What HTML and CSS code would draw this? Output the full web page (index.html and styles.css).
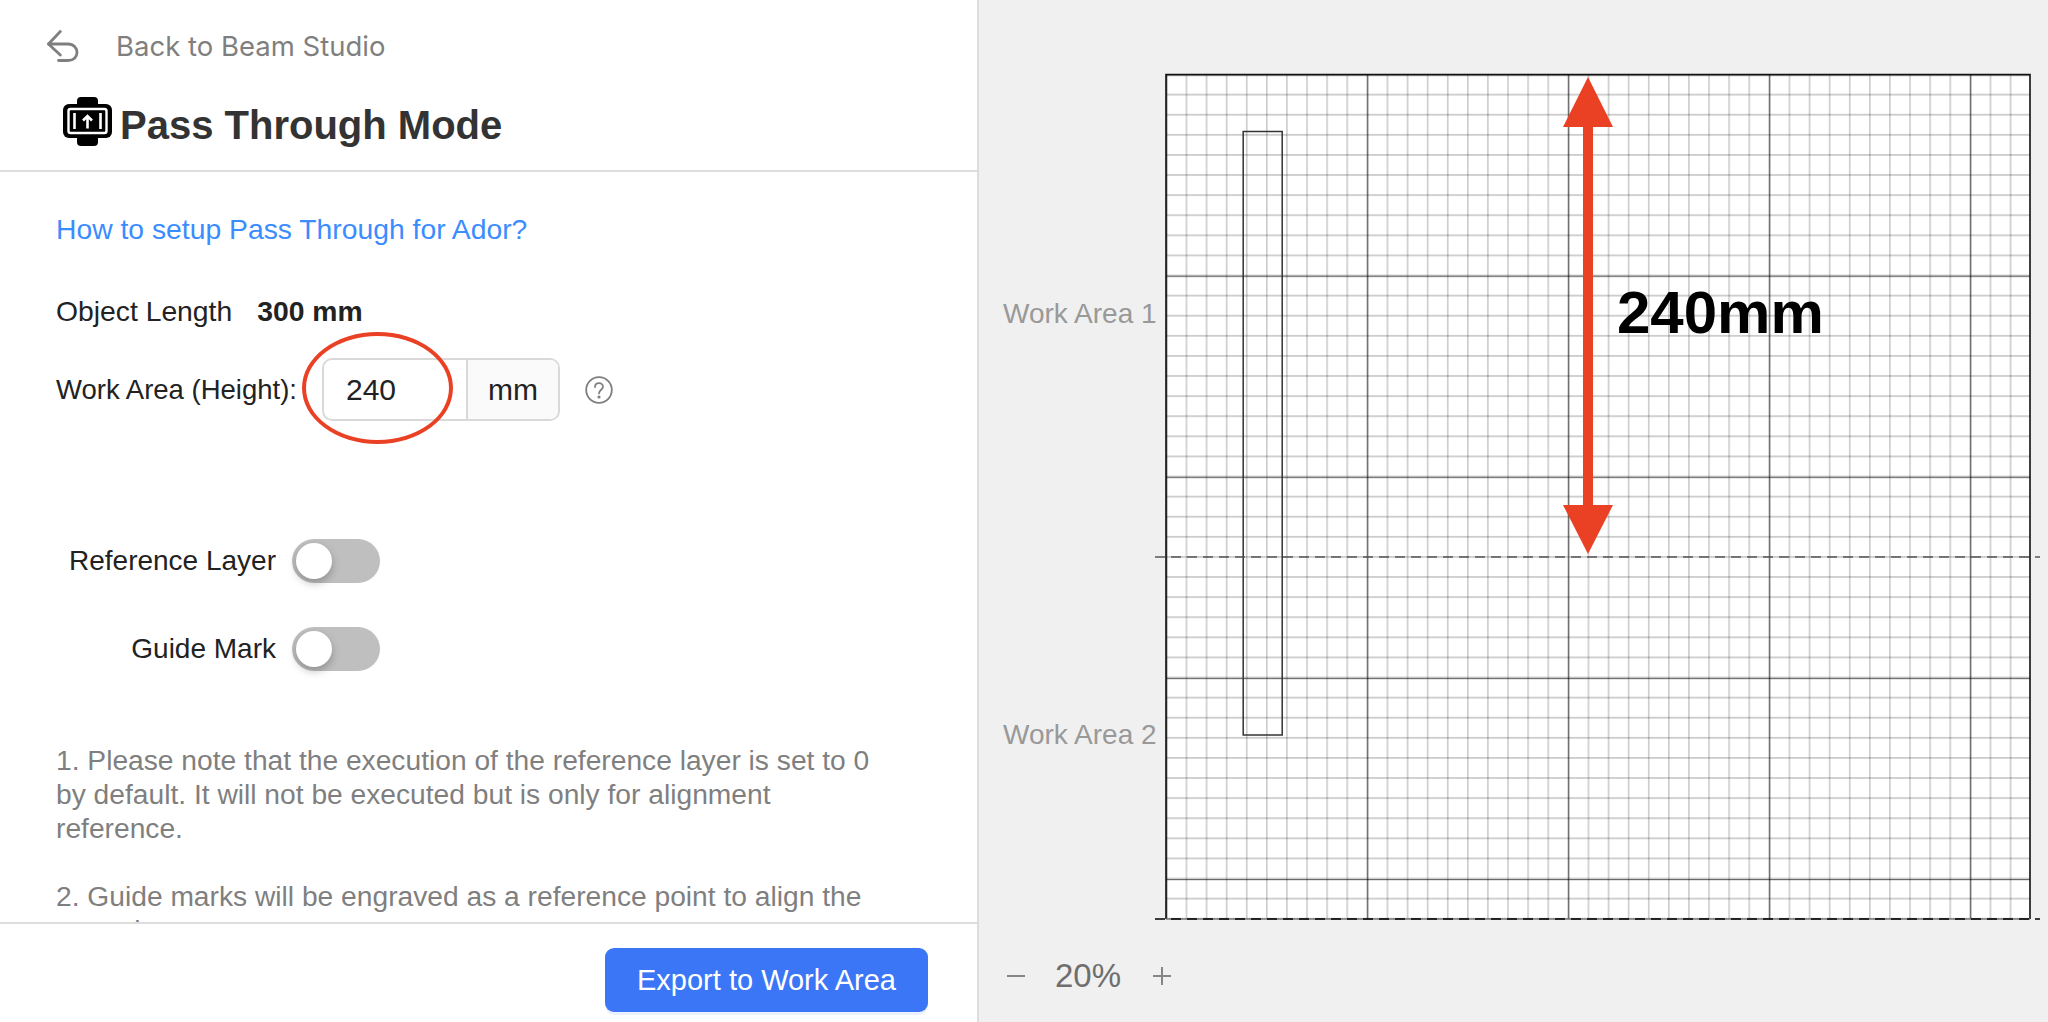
FILE: index.html

```html
<!DOCTYPE html>
<html lang="en">
<head>
  <meta charset="UTF-8" />
  <title>Pass Through Mode</title>
  <link rel="stylesheet" href="styles.css">
</head>
<body>
  <div class="page">
    <aside class="panel">
      <header class="panel-head">
        <div class="back-row">
          <svg class="back-icon" viewBox="0 0 32 32" fill="none" stroke="#7f7f7f" stroke-width="2.8" stroke-linecap="round" stroke-linejoin="round">
            <path d="M13.3 1.5 L1.5 14 L13.3 25" />
            <path d="M1.5 14 H21 C26.5 14 30 18 30 22.5 C30 27 26.5 30.5 21 30.5 H11.5" />
          </svg>
          <span class="back-text">Back to Beam Studio</span>
        </div>
        <div class="title-row">
          <svg class="title-icon" viewBox="0 0 49 49">
            <rect x="14" y="0" width="21" height="49" rx="4" fill="#000" />
            <rect x="0" y="7" width="49" height="34" rx="6" fill="#000" />
            <rect x="5.5" y="12" width="38" height="24" rx="2" fill="none" stroke="#fff" stroke-width="2.4" />
            <path d="M11.5 16 V32 M37.5 16 V32" stroke="#fff" stroke-width="2.6" />
            <path d="M24.5 31.5 V19 M20 23.5 L24.5 19 L29 23.5" fill="none" stroke="#fff" stroke-width="2.6" />
          </svg>
          <h1>Pass Through Mode</h1>
        </div>
      </header>

      <div class="panel-body">
        <a class="help-link" href="#">How to setup Pass Through for Ador?</a>
        <div class="length-row">
          <span>Object Length</span>
          <b>300 mm</b>
        </div>
        <div class="height-row">
          <span class="height-label">Work Area (Height):</span>
          <div class="unit-input">
            <span class="unit-value">240</span>
            <span class="unit-name">mm</span>
            <span class="red-ring"></span>
          </div>
          <svg class="help-icon" viewBox="0 0 28 28" fill="none" stroke="#7f7f7f" stroke-width="1.8">
            <circle cx="14" cy="14" r="12.8" />
            <path d="M10 11 C10 8.5 12 7.2 14 7.2 C16.2 7.2 18 8.7 18 10.8 C18 13.6 14 14 14 17.4" stroke-linecap="round" />
            <circle cx="14" cy="21" r="0.7" fill="#7f7f7f" />
          </svg>
        </div>

        <div class="switch-row first">
          <span class="switch-label">Reference Layer</span>
          <span class="switch"><span class="knob"></span></span>
        </div>
        <div class="switch-row">
          <span class="switch-label">Guide Mark</span>
          <span class="switch"><span class="knob"></span></span>
        </div>

        <div class="notes">
          <p>1. Please note that the execution of the reference layer is set to 0 by default. It will not be executed but is only for alignment reference.</p>
          <p>2. Guide marks will be engraved as a reference point to align the artwork.</p>
        </div>
      </div>

      <footer class="panel-foot">
        <button class="export-btn">Export to Work Area</button>
      </footer>
    </aside>

    <main class="stage">
      <div class="canvas">
        <svg class="grid" width="1069" height="1022" viewBox="0 0 1069 1022">
          <defs>
            <pattern id="minor-v" x="186.5" y="0" width="20.1" height="10" patternUnits="userSpaceOnUse">
              <rect x="0" y="0" width="1.6" height="10" fill="#000" fill-opacity="0.2" />
            </pattern>
            <pattern id="minor-h" x="0" y="73.6" width="10" height="20.1" patternUnits="userSpaceOnUse">
              <rect x="0" y="0" width="10" height="1.8" fill="#000" fill-opacity="0.2" />
            </pattern>
            <pattern id="major-v" x="186.9" y="0" width="201" height="10" patternUnits="userSpaceOnUse">
              <rect x="0" y="0" width="1.4" height="10" fill="#000" fill-opacity="0.5" />
            </pattern>
            <pattern id="major-h" x="0" y="74.6" width="10" height="201.1" patternUnits="userSpaceOnUse">
              <rect x="0" y="0" width="10" height="1.2" fill="#000" fill-opacity="0.55" />
            </pattern>
          </defs>
          <rect x="187" y="74" width="864" height="845" fill="#fff" />
          <rect x="187" y="74" width="864" height="845" fill="url(#minor-h)" />
          <rect x="187" y="74" width="864" height="845" fill="url(#minor-v)" />
          <rect x="187" y="74" width="864" height="845" fill="url(#major-v)" />
          <rect x="187" y="74" width="864" height="845" fill="url(#major-h)" />
          <path d="M187 919 V74.5 H1051 V919" fill="none" stroke="#111" stroke-width="1.6" />
          <rect x="264.2" y="131.5" width="39" height="603.5" fill="none" stroke="#333" stroke-width="1.5" />
          <path d="M176 557 H1061" stroke="#555" stroke-width="1.4" stroke-dasharray="10 6" />
          <path d="M187 919 H1051" stroke="#777" stroke-width="1.4" />
          <path d="M176 919 H1061" stroke="#000" stroke-width="1.6" stroke-dasharray="10 6" />
          <path d="M609 120 V512" stroke="#ea4125" stroke-width="10" />
          <path d="M609 77 L634 127 H584 Z" fill="#ea4125" />
          <path d="M609 554 L634 505 H584 Z" fill="#ea4125" />
        </svg>
        <span class="area-label area-one">Work Area 1</span>
        <span class="area-label area-two">Work Area 2</span>
        <span class="size-label">240mm</span>
      </div>
      <div class="zoom-bar">
        <svg class="zoom-icon" viewBox="0 0 18 18" stroke="#858585" stroke-width="2"><path d="M0 9 H18" /></svg>
        <span class="zoom-value">20%</span>
        <svg class="zoom-icon" viewBox="0 0 18 18" stroke="#858585" stroke-width="2"><path d="M0 9 H18 M9 0 V18" /></svg>
      </div>
    </main>
  </div>
</body>
</html>
```

FILE: styles.css

```css
* {
  box-sizing: border-box;
}

html, body {
  margin: 0;
  height: 100%;
  overflow: hidden;
}

body {
  font-family: 'Liberation Sans', Arial, sans-serif;
  background-color: #fff;
  color: #222;
}

.page {
  display: flex;
  width: 2048px;
  height: 1022px;
}

/* left panel */
.panel {
  flex: none;
  width: 979px;
  height: 1022px;
  display: flex;
  flex-direction: column;
  border-right: 2px solid #ddd;
  background-color: #fff;
}

.panel-head {
  flex: none;
  height: 172px;
  border-bottom: 2px solid #ddd;
  padding: 30px 0 0 47px;
}

.back-row {
  display: flex;
  align-items: center;
  gap: 37px;
  height: 32px;
}

.back-icon {
  width: 32px;
  height: 32px;
}

.back-text {
  font-family: Inter, 'Liberation Sans', sans-serif;
  font-size: 27.5px;
  color: #7f7f7f;
}

.title-row {
  display: flex;
  align-items: flex-start;
  gap: 8px;
  margin-top: 35px;
  padding-left: 16px;
}

.title-icon {
  width: 49px;
  height: 49px;
}

h1 {
  margin: 5px 0 0;
  font-size: 40px;
  line-height: 46px;
  color: #333;
}

.panel-body {
  flex: 1;
  min-height: 0;
  overflow: hidden;
  padding: 40px 96px 0 56px;
  font-size: 28.3px;
}

.help-link {
  display: block;
  height: 34px;
  line-height: 34px;
  color: #3b8cff;
  text-decoration: none;
}

.length-row {
  display: flex;
  gap: 25px;
  margin-top: 48px;
  height: 34px;
  line-height: 34px;
}

.height-row {
  display: flex;
  align-items: center;
  margin-top: 30px;
  height: 63px;
}

.height-label {
  width: 266px;
  font-size: 27.5px;
}

.unit-input {
  position: relative;
  display: flex;
  width: 238px;
  height: 63px;
  border: 2px solid #d9d9d9;
  border-radius: 10px;
  font-size: 30px;
}

.unit-value {
  width: 142px;
  padding-left: 22px;
  line-height: 59px;
}

.unit-name {
  flex: 1;
  text-align: center;
  line-height: 59px;
  background-color: #fafafa;
  border-left: 2px solid #d9d9d9;
  border-radius: 0 8px 8px 0;
}

.red-ring {
  position: absolute;
  left: -22px;
  top: -28px;
  width: 151px;
  height: 112px;
  border: 4px solid #ea4125;
  border-radius: 50%;
}

.help-icon {
  width: 28px;
  height: 28px;
  margin-left: 25px;
}

.switch-row {
  display: flex;
  align-items: center;
  justify-content: flex-end;
  width: 324px;
  height: 44px;
  margin-top: 44px;
  gap: 16px;
  font-size: 28px;
}

.switch-row.first {
  margin-top: 118px;
}

.switch {
  display: block;
  position: relative;
  width: 88px;
  height: 44px;
  border-radius: 22px;
  background-color: #bfbfbf;
}

.knob {
  position: absolute;
  left: 4px;
  top: 4px;
  width: 36px;
  height: 36px;
  border-radius: 50%;
  background-color: #fff;
  box-shadow: 0 4px 8px rgba(0, 0, 0, 0.25);
}

.notes {
  margin-top: 72px;
  font-size: 28.2px;
  line-height: 34px;
  color: #7f7f7f;
}

.notes p {
  margin: 0 0 34px;
}

.panel-foot {
  flex: none;
  display: flex;
  justify-content: flex-end;
  align-items: flex-start;
  height: 100px;
  padding: 24px 49px 0 0;
  border-top: 2px solid #ddd;
}

.export-btn {
  width: 323px;
  height: 64px;
  border: none;
  border-radius: 9px;
  background-color: #3b76f6;
  color: #fff;
  font-family: inherit;
  font-size: 29px;
  box-shadow: 0 3px 0 rgba(59, 118, 246, 0.1);
}

/* right side */
.stage {
  flex: 1;
  min-width: 0;
  position: relative;
  background-color: #f0f0f0;
}

.canvas {
  position: relative;
  height: 1022px;
}

.grid {
  display: block;
}

.area-label {
  position: absolute;
  left: 24px;
  font-size: 28px;
  color: #999;
}

.area-one {
  top: 298px;
}

.area-two {
  top: 719px;
}

.size-label {
  position: absolute;
  left: 638px;
  top: 278px;
  font-size: 60px;
  font-weight: bold;
  color: #000;
}

.zoom-bar {
  position: absolute;
  left: 28px;
  top: 958px;
  display: flex;
  align-items: center;
  height: 36px;
  color: #6e6e6e;
}

.zoom-icon {
  width: 18px;
  height: 18px;
}

.zoom-value {
  margin: 0 32px 0 30px;
  font-size: 33px;
}
```
